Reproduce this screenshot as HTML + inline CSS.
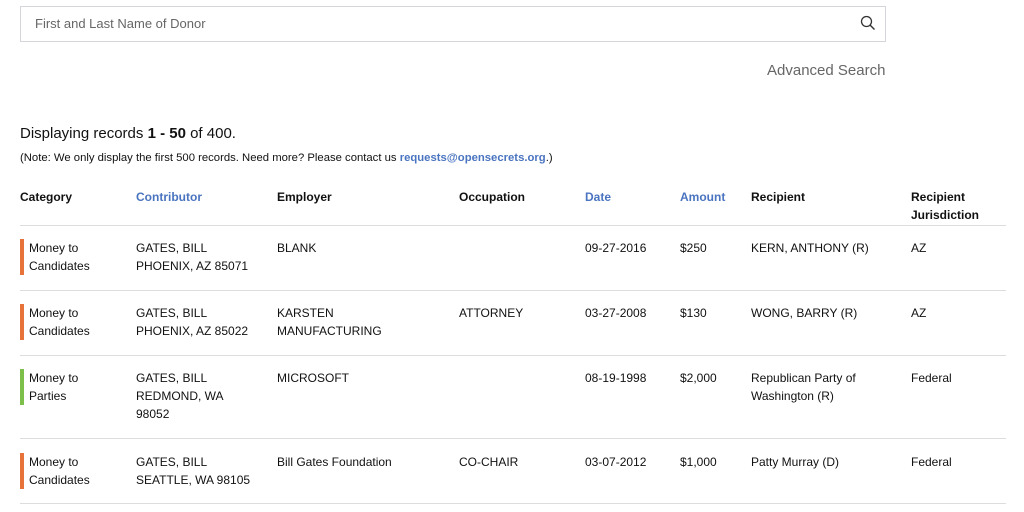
<!DOCTYPE html><html><head><style>
body{margin:0;width:1024px;height:512px;background:#fff;font-family:"Liberation Sans",sans-serif;color:#111;position:relative;overflow:hidden}
.a{position:absolute;white-space:nowrap}
.t{font-size:12px;line-height:18px}
.h{font-weight:bold;font-size:12px;line-height:18px}
.b{color:#4a74c0}
.ln{position:absolute;left:20px;width:986px;height:1px;background:#ddd}
.bar{position:absolute;left:20px;width:4px}
</style></head><body>
<div class="a" style="left:20px;top:6px;width:864px;height:34px;border:1px solid #d5d5dc;"></div>
<div class="a" style="left:35px;top:16px;font-size:13px;color:#666">First and Last Name of Donor</div>
<svg class="a" style="left:860px;top:15px" width="16" height="16" viewBox="0 0 16 16"><circle cx="6.5" cy="6.5" r="5" fill="none" stroke="#333" stroke-width="1.3"/><path d="M10 10l4.5 4.5" stroke="#333" stroke-width="1.4"/></svg>
<div class="a" style="left:767px;top:62px;font-size:15px;color:#666">Advanced Search</div>
<div class="a" style="left:20px;top:125px;font-size:15px">Displaying records <b>1 - 50</b> of 400.</div>
<div class="a" style="left:20px;top:152px;font-size:11.3px">(Note: We only display the first 500 records. Need more? Please contact us <b class="b">requests@opensecrets.org</b>.)</div>
<div class="a h" style="left:20px;top:188px">Category</div>
<div class="a h b" style="left:136px;top:188px">Contributor</div>
<div class="a h" style="left:277px;top:188px">Employer</div>
<div class="a h" style="left:459px;top:188px">Occupation</div>
<div class="a h b" style="left:585px;top:188px">Date</div>
<div class="a h b" style="left:680px;top:188px">Amount</div>
<div class="a h" style="left:751px;top:188px">Recipient</div>
<div class="a h" style="left:911px;top:188px">Recipient<br>Jurisdiction</div>
<div class="ln" style="top:225px"></div>

<div class="bar" style="top:239px;height:36px;background:#e8733a"></div>
<div class="a t" style="left:29px;top:239px">Money to<br>Candidates</div>
<div class="a t" style="left:136px;top:239px">GATES, BILL<br>PHOENIX, AZ 85071</div>
<div class="a t" style="left:277px;top:239px">BLANK</div>
<div class="a t" style="left:585px;top:239px">09-27-2016</div>
<div class="a t" style="left:680px;top:239px">$250</div>
<div class="a t" style="left:751px;top:239px">KERN, ANTHONY (R)</div>
<div class="a t" style="left:911px;top:239px">AZ</div>
<div class="ln" style="top:290px"></div>

<div class="bar" style="top:304px;height:36px;background:#e8733a"></div>
<div class="a t" style="left:29px;top:304px">Money to<br>Candidates</div>
<div class="a t" style="left:136px;top:304px">GATES, BILL<br>PHOENIX, AZ 85022</div>
<div class="a t" style="left:277px;top:304px">KARSTEN<br>MANUFACTURING</div>
<div class="a t" style="left:459px;top:304px">ATTORNEY</div>
<div class="a t" style="left:585px;top:304px">03-27-2008</div>
<div class="a t" style="left:680px;top:304px">$130</div>
<div class="a t" style="left:751px;top:304px">WONG, BARRY (R)</div>
<div class="a t" style="left:911px;top:304px">AZ</div>
<div class="ln" style="top:355px"></div>

<div class="bar" style="top:369px;height:36px;background:#7cc04b"></div>
<div class="a t" style="left:29px;top:369px">Money to<br>Parties</div>
<div class="a t" style="left:136px;top:369px">GATES, BILL<br>REDMOND, WA<br>98052</div>
<div class="a t" style="left:277px;top:369px">MICROSOFT</div>
<div class="a t" style="left:585px;top:369px">08-19-1998</div>
<div class="a t" style="left:680px;top:369px">$2,000</div>
<div class="a t" style="left:751px;top:369px">Republican Party of<br>Washington (R)</div>
<div class="a t" style="left:911px;top:369px">Federal</div>
<div class="ln" style="top:438px"></div>

<div class="bar" style="top:453px;height:36px;background:#e8733a"></div>
<div class="a t" style="left:29px;top:453px">Money to<br>Candidates</div>
<div class="a t" style="left:136px;top:453px">GATES, BILL<br>SEATTLE, WA 98105</div>
<div class="a t" style="left:277px;top:453px">Bill Gates Foundation</div>
<div class="a t" style="left:459px;top:453px">CO-CHAIR</div>
<div class="a t" style="left:585px;top:453px">03-07-2012</div>
<div class="a t" style="left:680px;top:453px">$1,000</div>
<div class="a t" style="left:751px;top:453px">Patty Murray (D)</div>
<div class="a t" style="left:911px;top:453px">Federal</div>
<div class="ln" style="top:503px"></div>
</body></html>
